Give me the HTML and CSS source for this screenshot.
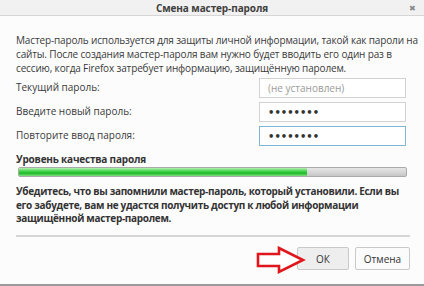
FILE: index.html
```html
<!DOCTYPE html>
<html lang="ru">
<head>
<meta charset="utf-8">
<link rel="stylesheet" href="styles.css">
</head>
<body>
<div class="dialog">
  <div class="titlebar">
    <span class="title">Смена мастер-пароля</span>
    <span class="close">&#x2716;</span>
  </div>
  <div class="content">
    <p class="intro">Мастер-пароль используется для защиты личной информации, такой как пароли на<br>сайты. После создания мастер-пароля вам нужно будет вводить его один раз в<br>сессию, когда Firefox затребует информацию, защищённую паролем.</p>
    <div class="form">
      <label class="label">Текущий пароль:</label>
      <div class="input placeholder">(не установлен)</div>
      <label class="label">Введите новый пароль:</label>
      <div class="input dots">&#x2022;&#x2022;&#x2022;&#x2022;&#x2022;&#x2022;&#x2022;&#x2022;</div>
      <label class="label">Повторите ввод пароля:</label>
      <div class="input dots focused">&#x2022;&#x2022;&#x2022;&#x2022;&#x2022;&#x2022;&#x2022;&#x2022;</div>
    </div>
    <div class="quality-label">Уровень качества пароля</div>
    <div class="meter"><div class="meter-fill" style="width:74.5%"></div></div>
    <p class="warning">Убедитесь, что вы запомнили мастер-пароль, который установили. Если вы<br>его забудете, вам не удастся получить доступ к любой информации<br>защищённой мастер-паролем.</p>
  </div>
  <div class="footer">
    <svg class="arrow" width="52" height="30" viewBox="0 0 52 30">
      <polygon points="2,8 23,8 23,2 47,14 23,26 23,20 2,20" fill="#fff" stroke="#e0161c" stroke-width="2.6" stroke-linejoin="miter"/>
    </svg>
    <button class="btn ok">ОК</button>
    <button class="btn cancel">Отмена</button>
  </div>
</div>
</body>
</html>
```
FILE: styles.css
```css
* { box-sizing: border-box; }
html, body { margin: 0; padding: 0; }
body {
  width: 424px;
  height: 286px;
  overflow: hidden;
  background: #fcfcfc;
  font-family: "Open Sans", "Noto Sans", sans-serif;
  font-size: 10px;
  color: #3a3a3a;
}
.dialog {
  width: 424px;
  height: 286px;
  display: flex;
  flex-direction: column;
  background: #fcfcfc;
  border-bottom: 2px solid #9a9a9a;
}
.titlebar {
  height: 16px;
  flex: none;
  background: #f1f1f1;
  border-bottom: 1px solid #d6d6d6;
  position: relative;
  display: flex;
  align-items: center;
  justify-content: center;
}
.title {
  font-weight: 700;
  font-size: 10px;
  color: #404040;
  line-height: 14px;
  letter-spacing: -0.1px;
}
.close {
  position: absolute;
  right: 8px;
  top: 2px;
  font-size: 8px;
  color: #888;
  line-height: 12px;
}
.content {
  flex: none;
  padding: 17px 17px 0 16px;
}
.intro {
  margin: 0;
  line-height: 14px;
  letter-spacing: -0.15px;
  white-space: nowrap;
}
.form {
  display: grid;
  grid-template-columns: 1fr 148px;
  row-gap: 4px;
  margin-top: 3px;
  align-items: center;
}
.label {
  line-height: 14px;
  padding-bottom: 3px;
  white-space: nowrap;
}
.input {
  height: 20px;
  border: 1px solid #d2d2d2;
  background: #fff;
  padding: 0 8px;
  display: flex;
  align-items: center;
  margin-right: 1px;
}
.placeholder { color: #9a9a9a; }
.dots {
  color: #333;
  font-family: "DejaVu Sans", sans-serif;
  font-size: 10px;
  font-weight: 700;
}
.focused { border-color: #7fb6d6; }
.quality-label {
  margin-top: 6px;
  font-weight: 700;
  line-height: 14px;
  color: #333;
  letter-spacing: -0.2px;
}
.meter {
  margin: 1px 0 0 2px;
  height: 10px;
  border: 1px solid #aaa;
  border-radius: 2px;
  background: linear-gradient(#e6e6e6, #d4d4d4 60%, #c6c6c6);
  overflow: hidden;
}
.meter-fill {
  height: 100%;
  background: linear-gradient(#b8f0b8, #44d44a 40%, #1fb827 65%, #7ee07e);
}
.warning {
  margin: 8px 0 0 0;
  font-weight: 700;
  line-height: 13.5px;
  color: #333;
  letter-spacing: -0.3px;
  white-space: nowrap;
}
.footer {
  margin: auto 14px 0 16px;
  border-top: 2px solid #d6d6d6;
  height: 49px;
  flex: none;
  display: flex;
  justify-content: flex-end;
  align-items: flex-start;
  gap: 6px;
  padding-top: 10px;
  position: relative;
}
.btn {
  height: 23px;
  padding: 0;
  border: 1px solid #c9c9c9;
  background: #fbfbfb;
  border-radius: 2px;
  font-family: "Open Sans", "Noto Sans", sans-serif;
  font-size: 10px;
  color: #333;
}
.ok {
  width: 52px;
  background: #eeeeee;
}
.cancel { width: 55px; }
.arrow {
  position: absolute;
  left: 240px;
  top: 9px;
}
```
